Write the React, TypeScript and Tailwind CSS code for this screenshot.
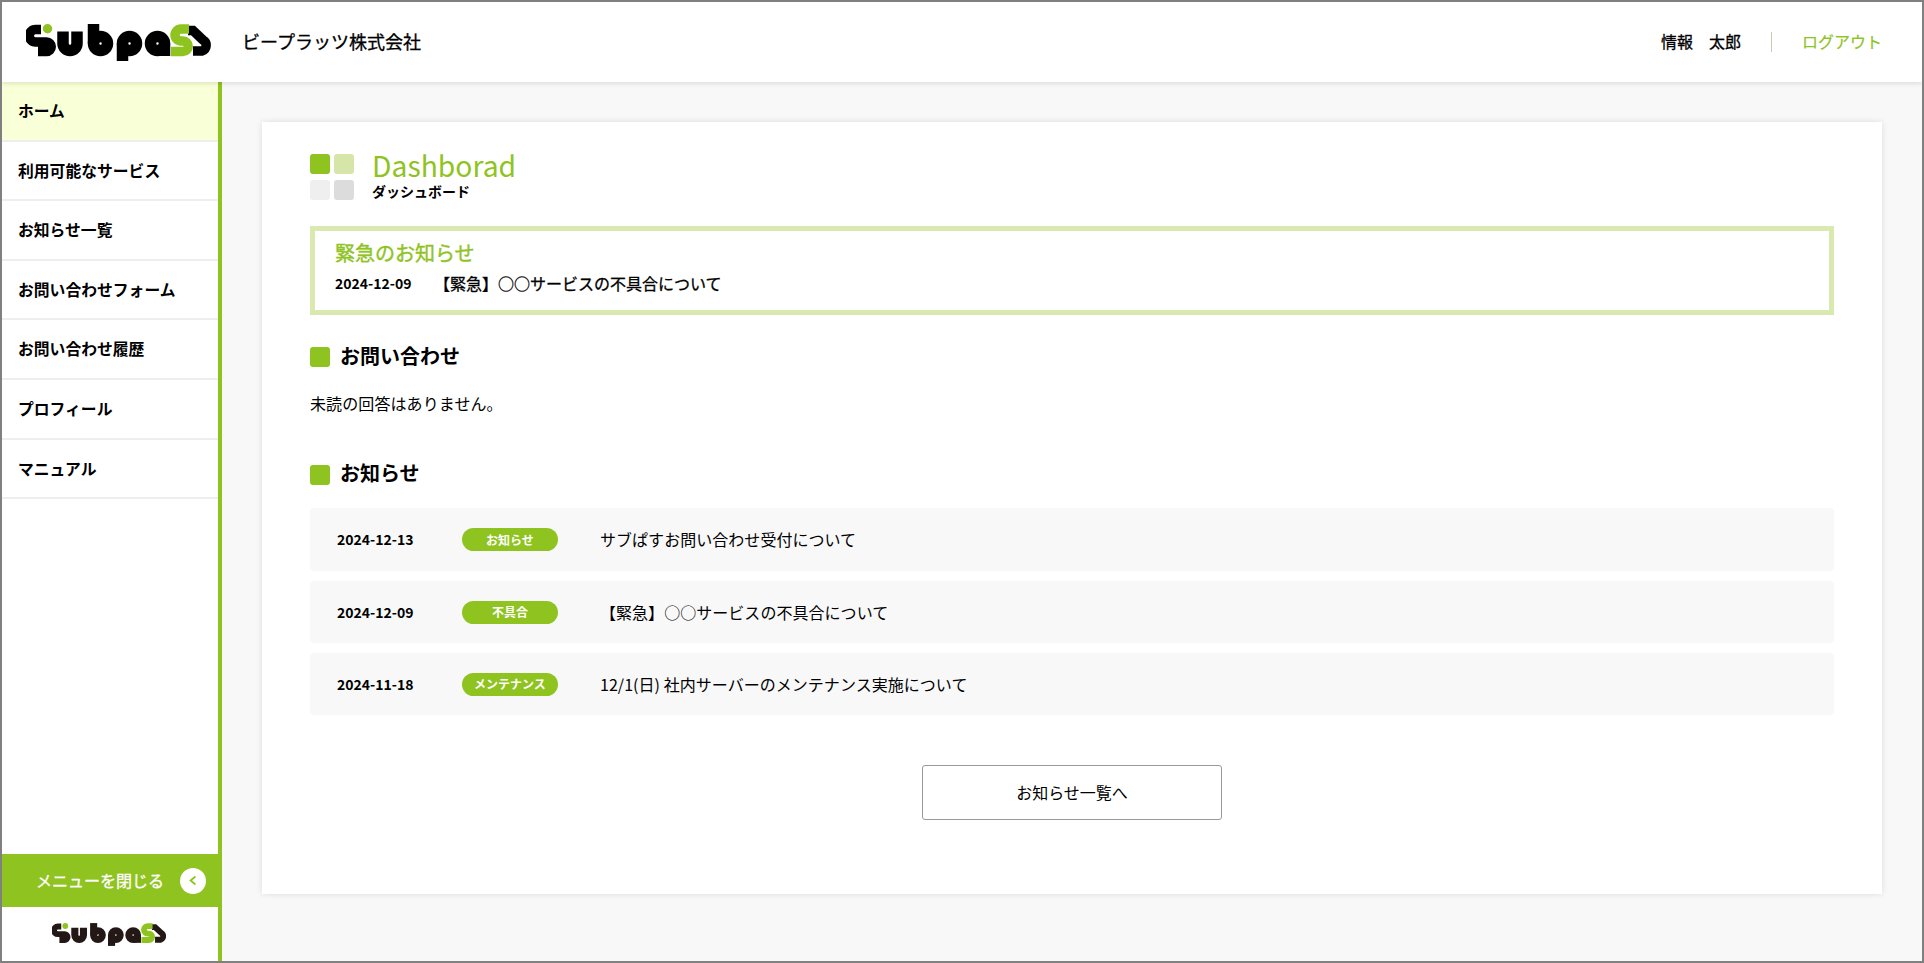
import React from 'react';

const menu = ['ホーム', '利用可能なサービス', 'お知らせ一覧', 'お問い合わせフォーム', 'お問い合わせ履歴', 'プロフィール', 'マニュアル'];

const news = [
  { date: '2024-12-13', tag: 'お知らせ', title: 'サブぱすお問い合わせ受付について', h: 'h-[63px]' },
  { date: '2024-12-09', tag: '不具合', title: '【緊急】○○サービスの不具合について', h: 'h-[62px]' },
  { date: '2024-11-18', tag: 'メンテナンス', title: '12/1(日) 社内サーバーのメンテナンス実施について', h: 'h-[62px]' },
];

const Logo: React.FC<{ className?: string; ink?: string }> = ({ className, ink = '#000' }) => (
  <svg viewBox="0 0 188 37" className={className} fill="none">
    <g stroke={ink} strokeWidth={9.5}>
      <path d="M15 5.500H9.500a6.250 6.250 0 0 0 0 12.500H20.500a4.750 4.750 0 0 1 0 9.500H12" />
      <path d="M162 6.500H167L177 16a6 6 0 0 1 -1 11H167" />
    </g>
    <g stroke={ink} strokeWidth={11.5}>
      <path d="M37 7.500V19.500a7 7 0 0 0 14 0V7.500" />
      <circle cx={74.500} cy={19.500} r={7} />
      <path d="M67.500 0V19.500" />
      <circle cx={103.500} cy={19.500} r={7} />
      <path d="M96.500 19.500V37" />
      <circle cx={131.500} cy={19.500} r={7} />
      <path d="M138.500 19.500V32" />
    </g>
    <path d="M163 5H155a6 6 0 0 0 0 12H157a5.250 5.250 0 0 1 0 10.500H145" stroke="#8fc31f" strokeWidth={9.5} />
    <circle cx={21.500} cy={4.700} r={4.700} fill="#8fc31f" />
  </svg>
);

const SectionTitle: React.FC<{ children: React.ReactNode; textClass?: string }> = ({ children, textClass = 'pb-[2px]' }) => (
  <h2 className="h-5 flex items-center gap-[10px] text-[20px] font-bold leading-[20px] text-black">
    <span className="w-5 h-5 rounded-[3px] bg-[#8fc31f]" />
    <span className={textClass}>{children}</span>
  </h2>
);

const App: React.FC = () => {
  return (
    <div className="w-[1924px] h-[963px] border-2 border-[#808080] bg-[#f8f8f8] flex flex-col overflow-hidden font-['Noto_Sans_CJK_JP','Noto_Sans',sans-serif] text-black">
      <header className="relative z-10 h-[80px] shrink-0 bg-white shadow-[0_2px_4px_rgba(0,0,0,0.1)] flex items-center pl-[24px] pr-[40px]">
        <Logo className="w-[188px] h-[37px] mt-[1px]" />
        <div className="ml-[28px] pb-[2px] text-[18px] [-webkit-text-stroke:0.3px_currentColor]">ビープラッツ株式会社</div>
        <div className="ml-auto flex items-center">
          <span className="pb-[2px] text-[16px] [-webkit-text-stroke:0.3px_currentColor]">情報　太郎</span>
          <span className="w-px h-5 bg-[#c8c8b4] mx-[30px]" />
          <span className="pb-[2px] text-[16px] text-[#8fc31f] [-webkit-text-stroke:0.2px_currentColor]">ログアウト</span>
        </div>
      </header>

      <div className="flex flex-1 min-h-0">
        <aside className="w-[220px] shrink-0 bg-white border-r-4 border-[#8fc31f] flex flex-col">
          <nav className="flex-1">
            {menu.map((item, i) => (
              <div
                key={item}
                className={`h-[59.6px] flex items-center pl-4 border-b-2 border-[#eeeeee] text-[15.8px] font-bold ${i === 0 ? 'bg-[#f9ffd6]' : ''}`}
              >
                {item}
              </div>
            ))}
          </nav>
          <div className="h-[53px] bg-[#8fc31f] flex items-center justify-end pr-[12px] gap-4 text-white text-[16px]">
            <span className="pb-[2px] [-webkit-text-stroke:0.3px_currentColor]">メニューを閉じる</span>
            <span className="w-[26px] h-[26px] rounded-full bg-white flex items-center justify-center">
              <svg viewBox="0 0 10 12" className="w-[8px] h-[11px]" fill="none" stroke="#8fc31f" strokeWidth={2.2}>
                <path d="M8 1L2 6l6 5" />
              </svg>
            </span>
          </div>
          <div className="h-[54px] flex items-center justify-center">
            <Logo className="w-[116px] h-[23px]" ink="#231815" />
          </div>
        </aside>

        <main className="flex-1 px-10 pt-10">
          <div className="h-[772px] bg-white shadow-[0_0_6px_rgba(0,0,0,0.12)] px-12 pt-8">
            <div className="flex items-start h-[46px]">
              <div className="grid grid-cols-[20px_20px] gap-x-1 gap-y-[6px] shrink-0">
                <span className="h-5 rounded-[3px] bg-[#8fc31f]" />
                <span className="h-5 rounded-[3px] bg-[#d5e6a8]" />
                <span className="h-5 rounded-[3px] bg-[#efefef]" />
                <span className="h-5 rounded-[3px] bg-[#dcdcdc]" />
              </div>
              <div className="ml-[18px]">
                <div className="text-[28.3px] leading-[28px] mt-[-3px] text-[#8fc31f]">Dashborad</div>
                <div className="text-[14px] leading-[14px] mt-[5px] font-bold">ダッシュボード</div>
              </div>
            </div>

            <section className="mt-[26px] h-[89px] border-[5px] border-[#d9e9b0] pl-5 pt-[8px]">
              <div className="text-[20px] leading-[28px] text-[#8fc31f] [-webkit-text-stroke:0.4px_currentColor]">緊急のお知らせ</div>
              <div className="flex items-center mt-[4px] h-6">
                <span className="text-[14px] font-bold w-[99px]">2024-12-09</span>
                <span className="text-[16px] [-webkit-text-stroke:0.3px_currentColor]">【緊急】○○サービスの不具合について</span>
              </div>
            </section>

            <section className="mt-[32px]">
              <SectionTitle>お問い合わせ</SectionTitle>
              <p className="mt-[24px] text-[16px] leading-6 tracking-[0.1px]">未読の回答はありません。</p>
            </section>

            <section className="mt-[50px]">
              <SectionTitle textClass="pb-[4px]">お知らせ</SectionTitle>
              <div className="mt-[23px] flex flex-col gap-[10px]">
                {news.map((n) => (
                  <div key={n.date} className={`${n.h} rounded-[4px] bg-[#f8f8f8] flex items-center pl-[27px]`}>
                    <span className="w-[125px] text-[14px] font-bold">{n.date}</span>
                    <span className="w-[96px] h-[23px] rounded-full bg-[#8fc31f] flex items-center justify-center text-white text-[12px] font-bold">
                      {n.tag}
                    </span>
                    <span className="ml-[42px] pb-[1px] text-[16px] tracking-[0.04px]">{n.title}</span>
                  </div>
                ))}
              </div>
            </section>

            <div className="mt-[50px] flex justify-center">
              <div className="w-[300px] h-[55px] rounded-[3px] border border-[#999999] bg-white flex items-center justify-center pb-[2px] text-[16px]">
                お知らせ一覧へ
              </div>
            </div>
          </div>
        </main>
      </div>
    </div>
  );
};

export default App;
